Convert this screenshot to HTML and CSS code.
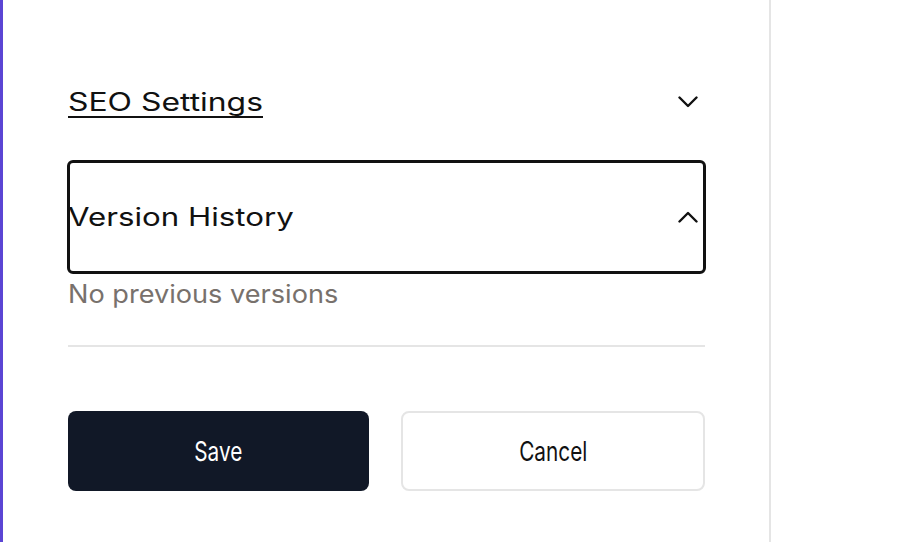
FILE: index.html
```html
<!DOCTYPE html>
<html lang="en">
<head>
<meta charset="utf-8">
<title>Settings panel</title>
<link rel="stylesheet" href="styles.css">
</head>
<body>
<div class="page">
  <aside class="panel">
    <div class="content">
      <button class="acc-head" type="button">
        <span class="acc-title seo underlined">SEO Settings</span>
        <svg class="chev" width="20" height="12" viewBox="0 0 20 12" aria-hidden="true"><polyline points="1.5,1.5 10,10 18.5,1.5" fill="none" stroke="#111" stroke-width="2.4" stroke-linecap="round" stroke-linejoin="round"/></svg>
      </button>
      <button class="acc-head focused" type="button">
        <span class="acc-title ver">Version History</span>
        <svg class="chev" width="20" height="12" viewBox="0 0 20 12" aria-hidden="true"><polyline points="1.5,10.5 10,2 18.5,10.5" fill="none" stroke="#111" stroke-width="2.4" stroke-linecap="round" stroke-linejoin="round"/></svg>
      </button>
      <p class="empty"><span class="empty-text">No previous versions</span></p>
      <hr class="sep">
      <div class="actions">
        <button class="btn btn-primary" type="button"><span class="btn-label">Save</span></button>
        <button class="btn btn-secondary" type="button"><span class="btn-label">Cancel</span></button>
      </div>
    </div>
  </aside>
  <div class="rest"></div>
</div>
</body>
</html>
```
FILE: styles.css
```css
* { box-sizing: border-box; }
html, body { margin: 0; padding: 0; background: #fff; }
body { font-family: Inter, "Noto Sans", sans-serif; color: #111; }
.page { display: flex; width: 914px; height: 542px; overflow: hidden; }
.panel {
  width: 771px;
  height: 542px;
  border-left: 3px solid #5b45d4;
  border-right: 2px solid #e5e5e5;
  padding: 46px 0 0 65px;
}
.rest { flex: 1; }
.content { width: 637px; display: flex; flex-direction: column; }
.acc-head {
  display: flex;
  align-items: center;
  justify-content: space-between;
  width: 100%;
  height: 112px;
  padding: 0 7px 0 0;
  margin: 0;
  border: none;
  background: none;
  font: inherit;
  font-size: 25px;
  color: #111;
  text-align: left;
  border-radius: 5px;
}
.acc-head + .acc-head { margin-top: 3px; }
.focused { outline: 3px solid #111; outline-offset: -2px; }
.acc-title { display: inline-block; transform-origin: left center; white-space: nowrap; }
.seo { transform: scaleX(1.275); }
.ver { transform: scaleX(1.25); }
.underlined { text-decoration: underline; text-decoration-thickness: 2px; text-underline-offset: 5px; }
.chev { display: block; }
.empty { margin: 7px 0 0; font-size: 25px; color: #78716c; line-height: 29px; }
.empty-text { display: inline-block; transform: scaleX(1.085); transform-origin: left center; white-space: nowrap; }
.sep { margin: 36px 0 0; border: none; height: 2px; background: #e5e5e5; }
.actions { margin-top: 64px; display: grid; grid-template-columns: 301px 1fr; gap: 32px; }
.btn {
  height: 80px;
  border-radius: 8px;
  font: inherit;
  font-size: 27px;
  margin: 0;
  padding: 0;
}
.btn-label { display: inline-block; transform: scaleX(0.77); }
.btn-primary { background: #111827; color: #fff; border: none; }
.btn-secondary { background: #fff; color: #111; border: 2px solid #e5e5e5; }
```
